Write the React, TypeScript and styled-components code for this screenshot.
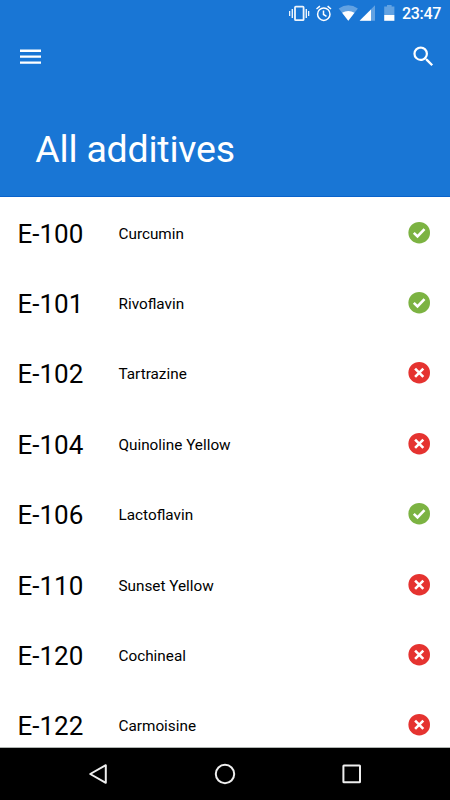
import React from "react";
import styled, { createGlobalStyle } from "styled-components";

const GlobalStyle = createGlobalStyle`
  * { box-sizing: border-box; }
  body { margin: 0; background: #fff; font-family: Roboto, "Noto Sans", sans-serif; }
`;

const Screen = styled.div`
  width: 450px;
  height: 800px;
  display: flex;
  flex-direction: column;
  overflow: hidden;
  background: #fff;
`;

const Header = styled.header`
  height: 197px;
  flex: none;
  display: flex;
  flex-direction: column;
  background: #1976d5;
  color: #fff;
  border-bottom: 1px solid #0a63cb;
`;

const StatusBar = styled.div`
  height: 28px;
  display: flex;
  align-items: center;
  padding-left: 288px;
`;

const Clock = styled.span`
  width: 40px;
  margin-left: 2px;
  font-size: 16px;
  line-height: 28px;
  font-weight: 500;
  letter-spacing: -0.3px;
`;

const Toolbar = styled.nav`
  height: 57px;
  display: flex;
  justify-content: space-between;
  align-items: center;
  padding: 0 12px 0 15px;
`;

const IconButton = styled.button`
  width: 30px;
  height: 30px;
  padding: 0;
  border: 0;
  background: none;
  color: inherit;
  display: grid;
  place-items: center;
`;

const Title = styled.h1`
  margin: 42px 0 0 35.3px;
  font-size: 37.5px;
  line-height: 44px;
  font-weight: 400;
  letter-spacing: -0.22px;
`;

const List = styled.ul`
  flex: 1;
  min-height: 0;
  margin: 0;
  padding: 0;
  list-style: none;
  overflow: hidden;
`;

const Row = styled.li`
  height: 70.4px;
  display: grid;
  grid-template-columns: 101px 1fr 25px;
  align-items: center;
  padding: 0 18px 0 17.5px;
  color: #000;
`;

const Code = styled.span`
  font-size: 26px;
  line-height: 32px;
  padding-top: 3px;
`;

const Name = styled.span`
  font-size: 15.3px;
  line-height: 20px;
  padding-top: 3px;
`;

const Badge = styled.svg<{ $safe: boolean }>`
  display: block;
  width: 25px;
  height: 25px;
  color: ${(p) => (p.$safe ? "#7cb342" : "#e53330")};
`;

const NavBar = styled.footer`
  height: 53px;
  flex: none;
  display: flex;
  justify-content: center;
  align-items: center;
  gap: 97px;
  background: #000;
  border-top: 1px solid #b0b5b2;
`;

const StatusIcons = () => (
  <svg width="112" height="28" viewBox="288 0 112 28" fill="#fff">
    <g opacity=".92">
      <rect x="295" y="6.6" width="8.6" height="13.6" rx=".8" fill="none" stroke="#fff" strokeWidth="1.8" />
      <path d="M289 11h1.3v5H289zM291.6 9h1.4v9h-1.4zM305.6 9h1.4v9h-1.4zM308 11h1.3v5H308z" />
    </g>
    <g fill="none" stroke="#fff" strokeWidth="1.5">
      <circle cx="323.8" cy="14.2" r="6.2" />
      <path d="M323.5 10.5v4l3 1.8M316.5 9l3.4-2.8M331 9l-3.4-2.8" />
    </g>
    <path opacity=".32" d="M338.7 8.4Q348.3 2.2 357.9 8.4L348.3 20.8z" />
    <path d="M342.1 12.8Q348.3 9.3 354.5 12.8L348.3 20.8z" />
    <path opacity=".32" d="M375 5.2V20.8H359.6z" />
    <path d="M371 9.4V20.8H359.6z" />
    <path opacity=".32" d="M387 5h4.6v1.5h2.8V15h-10.2V6.5h2.8z" />
    <path d="M384.2 15h10.2v5.8h-10.2z" />
  </svg>
);

const MenuIcon = () => (
  <svg width="30" height="30" viewBox="0 0 30 30" fill="currentColor">
    <path d="M5 7.6h21v2.3H5zM5 13.5h21v2.3H5zM5 19.4h21v2.3H5z" />
  </svg>
);

const SearchIcon = () => (
  <svg width="27" height="27" viewBox="0 0 24 24" fill="currentColor">
    <path d="M15.5 14h-.79l-.28-.27A6.47 6.47 0 0 0 16 9.5 6.5 6.5 0 1 0 9.5 16c1.61 0 3.09-.59 4.23-1.57l.27.28v.79l5 4.99L20.49 19l-4.99-5zm-6 0C7.01 14 5 11.99 5 9.5S7.01 5 9.5 5 14 7.01 14 9.5 11.99 14 9.5 14z" />
  </svg>
);

const StatusBadge = ({ safe }: { safe: boolean }) => (
  <Badge $safe={safe} viewBox="0 0 25 25" fill="none">
    <circle cx="12.2" cy="12.7" r="10.8" fill="currentColor" />
    {safe ? (
      <path d="M6.8 12.9l3.7 3.6 7-7.4" stroke="#fff" strokeWidth="2.6" />
    ) : (
      <path d="M8.1 8.6l8.2 8.2M16.3 8.6l-8.2 8.2" stroke="#fff" strokeWidth="2.6" />
    )}
  </Badge>
);

const additives = [
  { code: "E-100", name: "Curcumin", safe: true },
  { code: "E-101", name: "Rivoflavin", safe: true },
  { code: "E-102", name: "Tartrazine", safe: false },
  { code: "E-104", name: "Quinoline Yellow", safe: false },
  { code: "E-106", name: "Lactoflavin", safe: true },
  { code: "E-110", name: "Sunset Yellow", safe: false },
  { code: "E-120", name: "Cochineal", safe: false },
  { code: "E-122", name: "Carmoisine", safe: false },
];

export default function App() {
  return (
    <Screen>
      <GlobalStyle />
      <Header>
        <StatusBar>
          <StatusIcons />
          <Clock>23:47</Clock>
        </StatusBar>
        <Toolbar>
          <IconButton aria-label="Menu"><MenuIcon /></IconButton>
          <IconButton aria-label="Search"><SearchIcon /></IconButton>
        </Toolbar>
        <Title>All additives</Title>
      </Header>
      <List>
        {additives.map((a) => (
          <Row key={a.code}>
            <Code>{a.code}</Code>
            <Name>{a.name}</Name>
            <StatusBadge safe={a.safe} />
          </Row>
        ))}
      </List>
      <NavBar>
        <IconButton aria-label="Back">
          <svg width="30" height="30" fill="none" stroke="#eee" strokeWidth="2" strokeLinejoin="round">
            <path d="M22.8 6.2v17.6L7.2 15z" />
          </svg>
        </IconButton>
        <IconButton aria-label="Home">
          <svg width="30" height="30" fill="none" stroke="#eee" strokeWidth="2">
            <circle cx="15" cy="15" r="9.2" />
          </svg>
        </IconButton>
        <IconButton aria-label="Overview">
          <svg width="30" height="30" fill="none" stroke="#eee" strokeWidth="2">
            <rect x="6.4" y="6.6" width="16.6" height="16.6" rx=".5" />
          </svg>
        </IconButton>
      </NavBar>
    </Screen>
  );
}
